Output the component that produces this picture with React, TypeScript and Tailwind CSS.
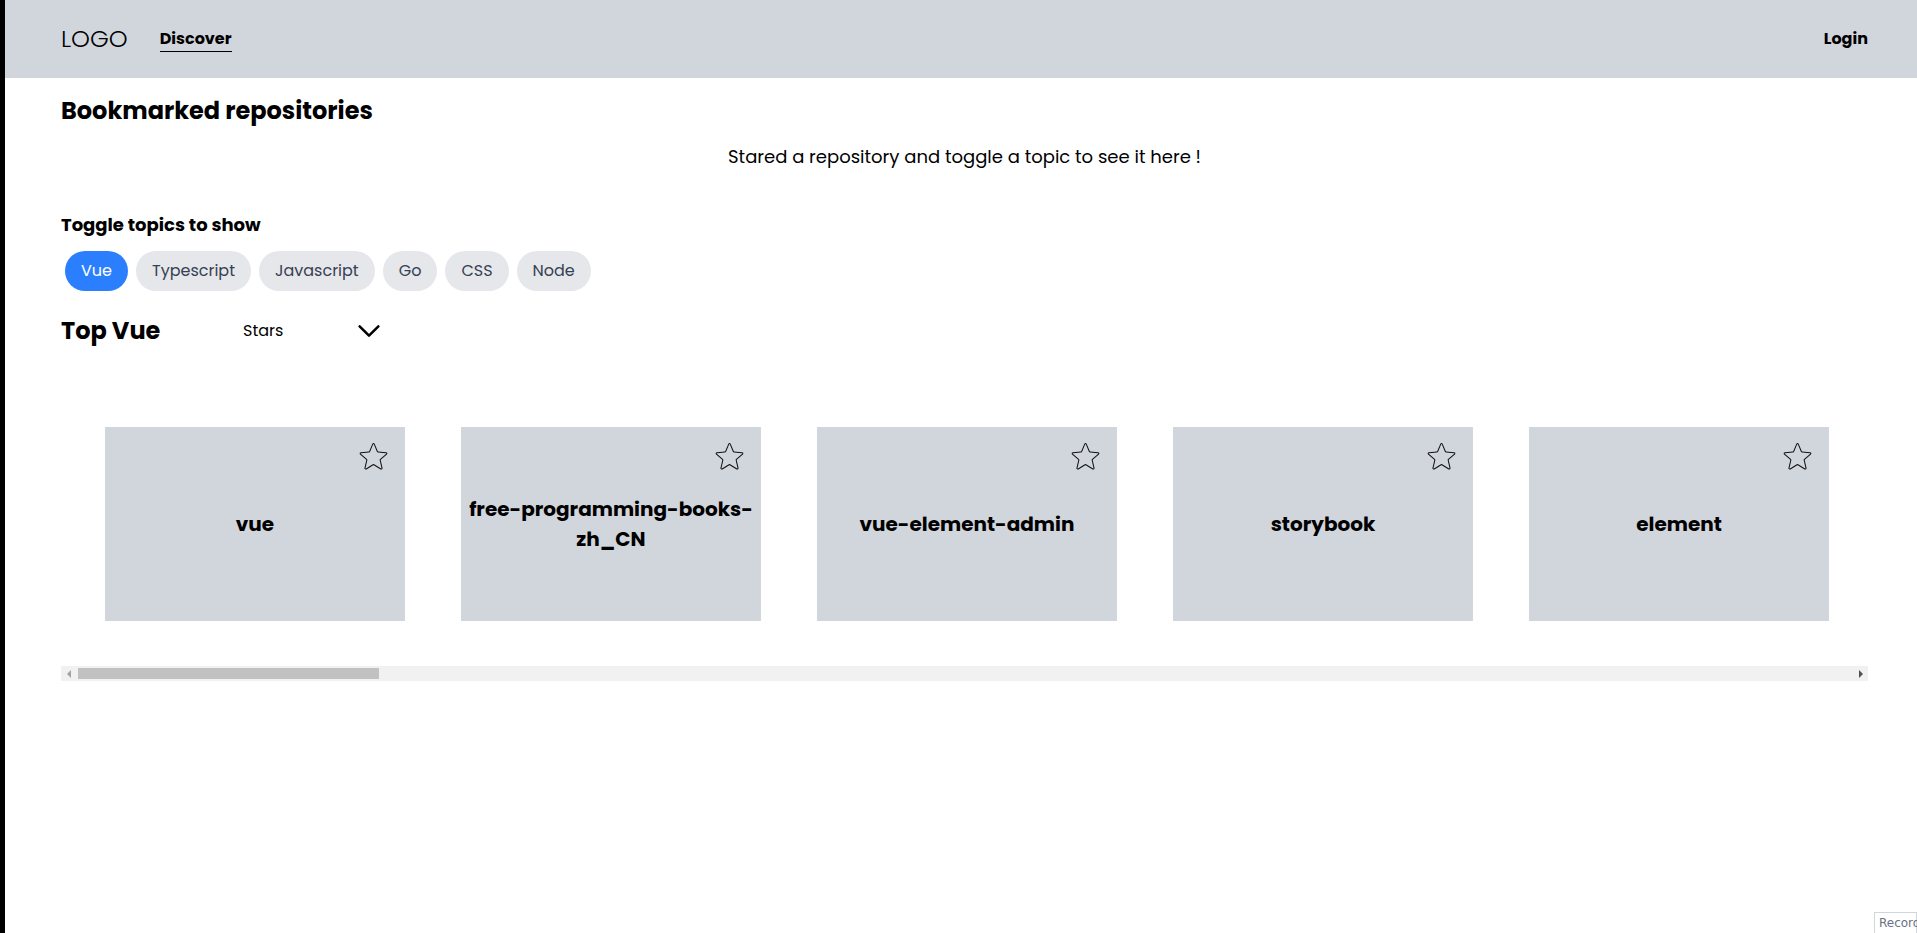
import { useState } from "react";

const topics = ["Vue", "Typescript", "Javascript", "Go", "CSS", "Node"];

const repos = [
  "vue",
  "free-programming-books-zh_CN",
  "vue-element-admin",
  "storybook",
  "element",
  "vuetify",
  "iview",
  "mall",
  "vant",
  "nuxt.js",
  "ant-design-vue",
  "quasar",
  "vue-cli",
  "vuex",
  "vue-router",
  "vue-vben-admin",
  "awesome-vue",
  "vuepress",
  "vue-devtools",
  "vitepress",
  "marktext",
  "slidev",
  "naive-ui",
  "element-plus",
  "vue-admin-template",
  "vue-pure-admin",
  "vueuse",
  "vue-next",
  "vite",
  "halo",
];

function StarIcon() {
  return (
    <svg viewBox="0 0 24 24" fill="none" stroke="#111" strokeWidth={0.7} className="w-[35px] h-[35px]">
      <path
        strokeLinejoin="round"
        d="M11.48 3.499a.562.562 0 0 1 1.04 0l2.125 5.111a.563.563 0 0 0 .475.345l5.518.442c.499.04.701.663.321.988l-4.204 3.602a.563.563 0 0 0-.182.557l1.285 5.385a.562.562 0 0 1-.84.61l-4.725-2.885a.562.562 0 0 0-.586 0L6.982 20.54a.562.562 0 0 1-.84-.61l1.285-5.386a.562.562 0 0 0-.182-.557l-4.204-3.602a.562.562 0 0 1 .321-.988l5.518-.442a.563.563 0 0 0 .475-.345L11.48 3.5Z"
      />
    </svg>
  );
}

function RepoCard({ name }: { name: string }) {
  return (
    <div className="relative shrink-0 w-[300px] h-[194px] bg-gray-300 flex items-center justify-center p-2 text-center">
      <button className="absolute top-[12px] right-[14px]">
        <StarIcon />
      </button>
      <span className="text-xl leading-[30px] font-bold text-black break-words">{name}</span>
    </div>
  );
}

// classic scrollbar look under the card row (headless capture hides native bars)
function ScrollTrack() {
  return (
    <div className="mt-px flex h-[15px] bg-[#f1f1f1]">
      <div className="w-[15px] flex items-center justify-center">
        <div className="w-0 h-0 border-y-[4px] border-y-transparent border-r-[4px] border-r-[#a3a3a3]" />
      </div>
      <div className="flex-1 p-[2px]">
        <div className="h-full w-[301px] bg-[#c1c1c1]" />
      </div>
      <div className="w-[15px] flex items-center justify-center">
        <div className="w-0 h-0 border-y-[4px] border-y-transparent border-l-[4px] border-l-[#505050]" />
      </div>
    </div>
  );
}

export default function App() {
  const [active, setActive] = useState("Vue");

  return (
    <div className="flex min-h-screen bg-white text-black font-['Poppins','Open_Sans',sans-serif]">
      <div className="w-[5px] shrink-0 bg-black" />
      <div className="flex-1 min-w-0">
        <header className="h-[78px] bg-gray-300 flex items-center pl-14 pr-[49px]">
          <span className="text-2xl font-light">LOGO</span>
          <nav className="ml-8">
            <a className="block font-bold leading-6 border-b border-black">Discover</a>
          </nav>
          <span className="ml-auto font-bold">Login</span>
        </header>

        <main className="pl-14 pr-[49px]">
          <h1 className="mt-[17px] text-2xl font-bold leading-8">Bookmarked repositories</h1>
          <p className="mt-4 text-center text-lg leading-7">
            Stared a repository and toggle a topic to see it here !
          </p>

          <h2 className="mt-10 text-lg font-bold leading-7">Toggle topics to show</h2>
          <div className="mt-2 flex flex-wrap">
            {topics.map(t => (
              <button
                key={t}
                onClick={() => setActive(t)}
                className={
                  t === active
                    ? "m-1 rounded-full px-4 py-2 leading-6 bg-blue-500 text-white"
                    : "m-1 rounded-full px-4 py-2 leading-6 bg-gray-200 text-gray-700"
                }
              >
                {t}
              </button>
            ))}
          </div>

          <div className="mt-5 flex items-center">
            <h2 className="w-[182px] text-2xl font-bold leading-8">Top {active}</h2>
            <div className="flex items-center w-[141px] justify-between text-base">
              <span>Stars</span>
              <svg viewBox="0 0 24 24" fill="none" stroke="#000" strokeWidth={2} className="w-[30px] h-[30px]">
                <path strokeLinecap="round" strokeLinejoin="round" d="m19.5 8.25-7.5 7.5-7.5-7.5" />
              </svg>
            </div>
          </div>

          <div className="mt-9 flex gap-14 overflow-x-auto px-11 py-11 [scrollbar-width:none]">
            {repos.map(r => (
              <RepoCard key={r} name={r} />
            ))}
          </div>
          <ScrollTrack />
        </main>
      </div>

      <div className="fixed right-0 bottom-0 w-[43px] h-[21px] overflow-hidden">
        <div className="border border-gray-300 bg-white px-1 text-xs leading-5 text-gray-500 whitespace-nowrap font-['DejaVu_Sans',sans-serif]">
          Record
        </div>
      </div>
    </div>
  );
}
